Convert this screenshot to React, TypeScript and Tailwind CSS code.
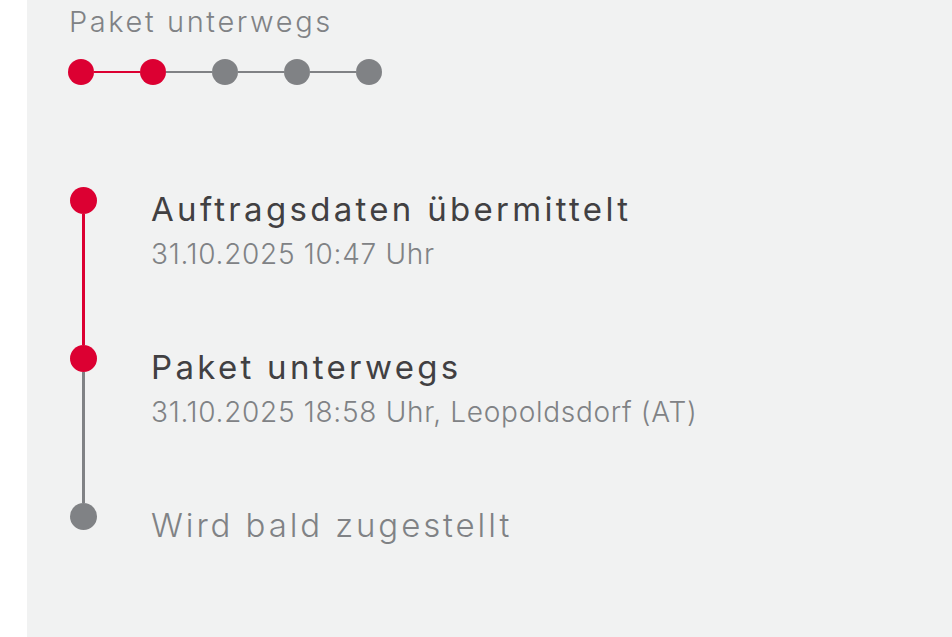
const RED = "bg-[#dc0032]";
const GREY = "bg-[#808285]";

const steps = [
  { title: "Auftragsdaten übermittelt", sub: "31.10.2025 10:47 Uhr", done: true, lineRed: true },
  { title: "Paket unterwegs", sub: "31.10.2025 18:58 Uhr, Leopoldsdorf (AT)", done: true, lineRed: false },
  { title: "Wird bald zugestellt", sub: "", done: false, lineRed: false },
];

function ProgressDots() {
  const active = 2;
  return (
    <div className="flex items-center">
      {[0, 1, 2, 3, 4].map((i) => (
        <div key={i} className="flex items-center">
          {i > 0 && (
            <div className={`h-[2px] w-[46px] ${i < active ? RED : GREY}`} />
          )}
          <div className={`h-[26px] w-[26px] rounded-full ${i < active ? RED : GREY}`} />
        </div>
      ))}
    </div>
  );
}

export default function App() {
  return (
    <div
      className="flex h-[637px] w-[952px] overflow-hidden bg-white"
      style={{ fontFamily: "Inter, 'Open Sans', sans-serif" }}
    >
      <div className="w-[27px] shrink-0 bg-white" />
      <main className="flex-1 bg-[#f1f2f2] pl-[42px]">
        <h2 className="mt-[4px] text-[29px] font-light leading-[36px] tracking-[2.6px] text-[#808285]">
          Paket unterwegs
        </h2>
        <div className="mt-[19px] -ml-[1px]">
          <ProgressDots />
        </div>

        <div className="mt-[102px] ml-[1px]">
          {steps.map((s, i) => {
            const last = i === steps.length - 1;
            return (
              <div key={s.title} className={`flex ${last ? "" : "h-[158px]"}`}>
                <div className="flex w-[27px] shrink-0 flex-col items-center">
                  <div className={`h-[27px] w-[27px] shrink-0 rounded-full ${s.done ? RED : GREY}`} />
                  {!last && (
                    <div className={`w-[3px] flex-1 ${s.lineRed ? RED : GREY}`} />
                  )}
                </div>
                <div className="ml-[54px] pt-[2px]">
                  <div
                    className={`text-[33px] leading-[40px] ${s.done ? "tracking-[3.3px] text-[#414042]" : "font-light tracking-[2.9px] text-[#808285]"}`}
                  >
                    {s.title}
                  </div>
                  {s.sub && (
                    <div className="mt-[8px] text-[28px] font-light leading-[34px] tracking-[0.7px] text-[#808285]">
                      {s.sub}
                    </div>
                  )}
                </div>
              </div>
            );
          })}
        </div>
      </main>
    </div>
  );
}
